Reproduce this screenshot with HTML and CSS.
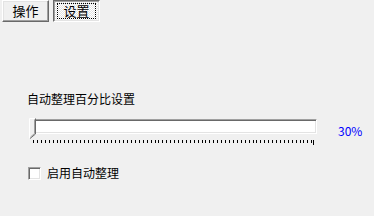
FILE: index.html
```html
<!DOCTYPE html>
<html lang="zh-CN">
<head>
  <meta charset="UTF-8" />
  <title>设置</title>
  <link rel="stylesheet" href="styles.css">
</head>
<body>
  <div class="tabs">
    <button class="tab">操作</button>
    <button class="tab active"><span class="focus">设置</span></button>
  </div>

  <div class="panel">
    <div class="label">自动整理百分比设置</div>

    <div class="slider-row">
      <div class="slider">
        <div class="track"></div>
        <div class="thumb">
          <svg width="7" height="21" viewBox="0 0 7 21">
            <path d="M0.5 0.5 H6.5 V16 L1 20.5 H0.5 Z" fill="#f0f0f0" />
            <path d="M0.5 20 V0.5 H6" fill="none" stroke="#ffffff" />
            <path d="M6.5 0.5 V16 L1 20.5" fill="none" stroke="#696969" />
            <path d="M5.5 1.5 V15.5 L1.5 19" fill="none" stroke="#a0a0a0" />
          </svg>
        </div>
        <div class="ticks"></div>
      </div>
      <div class="percent">30%</div>
    </div>

    <label class="check">
      <span class="box"></span>
      <span>启用自动整理</span>
    </label>
  </div>
</body>
</html>
```

FILE: styles.css
```css
* {
  box-sizing: border-box;
}
body {
  margin: 0;
  background: #f0f0f0;
  font-family: "Noto Sans CJK SC", "DejaVu Sans", sans-serif;
  font-size: 12px;
  color: #000;
  width: 374px;
  height: 216px;
  overflow: hidden;
}

.tabs {
  display: flex;
  gap: 4px;
  padding-left: 2px;
}

.tab {
  width: 47px;
  height: 22px;
  padding: 0;
  font: inherit;
  font-size: 13px;
  line-height: 14px;
  color: #000;
  background: #f0f0f0;
  border: 1px solid;
  border-color: #ffffff #696969 #696969 #ffffff;
  box-shadow: inset -1px -1px 0 #a0a0a0, inset 1px 1px 0 #e3e3e3;
}

.tab.active {
  border-color: #696969 #ffffff #ffffff #696969;
  box-shadow: inset 1px 1px 0 #a0a0a0, inset -1px -1px 0 #e3e3e3;
  background: conic-gradient(#ffffff 25%, #e4e4e4 0 50%, #ffffff 0 75%, #e4e4e4 0) 0 0 / 2px 2px;
  padding: 2px 3px 2px 3px;
}

.tab .focus {
  display: block;
  height: 16px;
  border: 1px dotted #000;
  line-height: 14px;
}

.panel {
  padding-left: 27px;
}

.label {
  margin-top: 70px;
  line-height: 14px;
}

.slider-row {
  display: flex;
  align-items: flex-start;
  margin-top: 12px;
}

.slider {
  position: relative;
  width: 290px;
  height: 27px;
}

.track {
  margin: 1px 0 0 3px;
  width: 287px;
  height: 15px;
  background: #fff;
  border: 1px solid;
  border-color: #a0a0a0 #ffffff #ffffff #a0a0a0;
  box-shadow: inset 1px 1px 0 #696969, inset -1px -1px 0 #e3e3e3;
}

.thumb {
  position: absolute;
  left: 2px;
  top: 0;
  line-height: 0;
}

.ticks {
  margin: 6px 0 0 6px;
  width: 281px;
  height: 3px;
  background: repeating-linear-gradient(to right, #000 0 1px, transparent 1px 3.92px);
  position: relative;
}

.ticks::after {
  content: "";
  position: absolute;
  right: 0;
  top: 0;
  width: 1px;
  height: 5px;
  background: #000;
}

.percent {
  margin: 6px 0 0 21px;
  color: #0000ff;
  line-height: 14px;
}

.check {
  display: flex;
  align-items: center;
  gap: 6px;
  margin: 21px 0 0 1px;
  line-height: 14px;
}

.box {
  width: 13px;
  height: 13px;
  background: #fff;
  border: 1px solid;
  border-color: #a0a0a0 #ffffff #ffffff #a0a0a0;
  box-shadow: inset 1px 1px 0 #696969, inset -1px -1px 0 #e3e3e3;
}
```
